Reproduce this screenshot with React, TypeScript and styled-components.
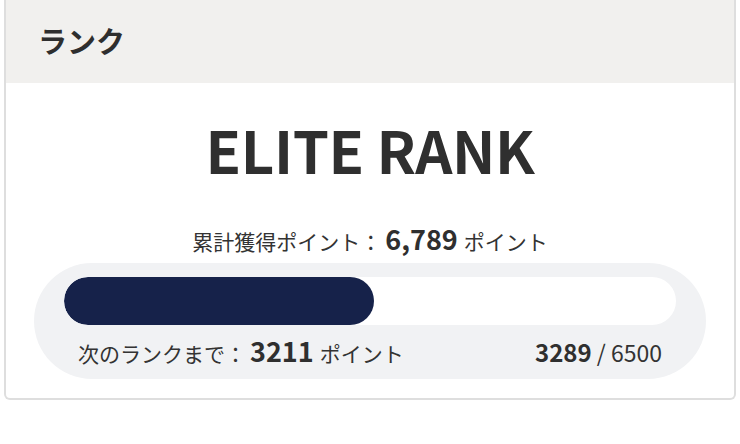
import React from "react";
import styled, { createGlobalStyle } from "styled-components";

const Global = createGlobalStyle`
  html, body { margin: 0; padding: 0; background: #ffffff; }
  body { font-family: "Noto Sans CJK JP", "Noto Sans", sans-serif; color: #333333; }
`;

const Page = styled.div`
  padding: 0 4px;
`;

const Card = styled.section`
  border: 2px solid #dedede;
  border-top: none;
  border-radius: 0 0 6px 6px;
  background: #ffffff;
  overflow: hidden;
`;

const Header = styled.header`
  height: 83px;
  background: #f1f0ee;
  display: flex;
  align-items: center;
  padding-left: 32px;
  padding-bottom: 3px;
  box-sizing: border-box;
`;

const HeaderTitle = styled.h2`
  margin: 0;
  font-size: 29px;
  font-weight: 700;
  line-height: 1;
  color: #2e2e2e;
`;

const Body = styled.div`
  display: flex;
  flex-direction: column;
  align-items: center;
  padding: 31px 28px 19px;
`;

const RankName = styled.h1`
  margin: 0;
  font-size: 58px;
  font-weight: 700;
  line-height: 70px;
  color: #2f2f2f;
  letter-spacing: -0.4px;
`;

const Total = styled.p`
  margin: 40px 0 0;
  font-size: 21px;
  line-height: 30px;
  display: flex;
  align-items: baseline;
  color: #333;
`;

const Big = styled.strong<{ $size: number }>`
  font-weight: 700;
  font-size: ${(p) => p.$size}px;
  margin: 0 6px 0 4px;
  color: #2f2f2f;
`;

const ProgressBox = styled.div`
  align-self: stretch;
  background: #f1f2f4;
  border-radius: 58px;
  padding: 14px 30px 8px;
  margin-top: 7px;
`;

const Track = styled.div`
  height: 48px;
  border-radius: 24px;
  background: #ffffff;
  overflow: hidden;
`;

const Fill = styled.div`
  height: 100%;
  border-radius: 24px;
  background: #16224a;
`;

const InfoRow = styled.div`
  display: flex;
  justify-content: space-between;
  align-items: baseline;
  padding: 0 14px;
  margin-top: 8px;
  line-height: 36px;
`;

const Label = styled.span`
  font-size: 21px;
  display: flex;
  align-items: baseline;
`;

const Ratio = styled.span`
  font-size: 23px;
  color: #333;
`;

const RatioCurrent = styled.strong`
  font-weight: 700;
  font-size: 24px;
  color: #2f2f2f;
`;

export default function App() {
  const current = 3289;
  const goal = 6500;
  const pct = (current / goal) * 100;
  return (
    <>
      <Global />
      <Page>
        <Card>
          <Header>
            <HeaderTitle>ランク</HeaderTitle>
          </Header>
          <Body>
            <RankName>ELITE RANK</RankName>
            <Total>
              累計獲得ポイント：<Big $size={27}>6,789</Big>ポイント
            </Total>
            <ProgressBox>
              <Track>
                <Fill style={{ width: `${pct}%` }} />
              </Track>
              <InfoRow>
                <Label>
                  次のランクまで：<Big $size={27}>3211</Big>ポイント
                </Label>
                <Ratio>
                  <RatioCurrent>{current}</RatioCurrent> / {goal}
                </Ratio>
              </InfoRow>
            </ProgressBox>
          </Body>
        </Card>
      </Page>
    </>
  );
}
